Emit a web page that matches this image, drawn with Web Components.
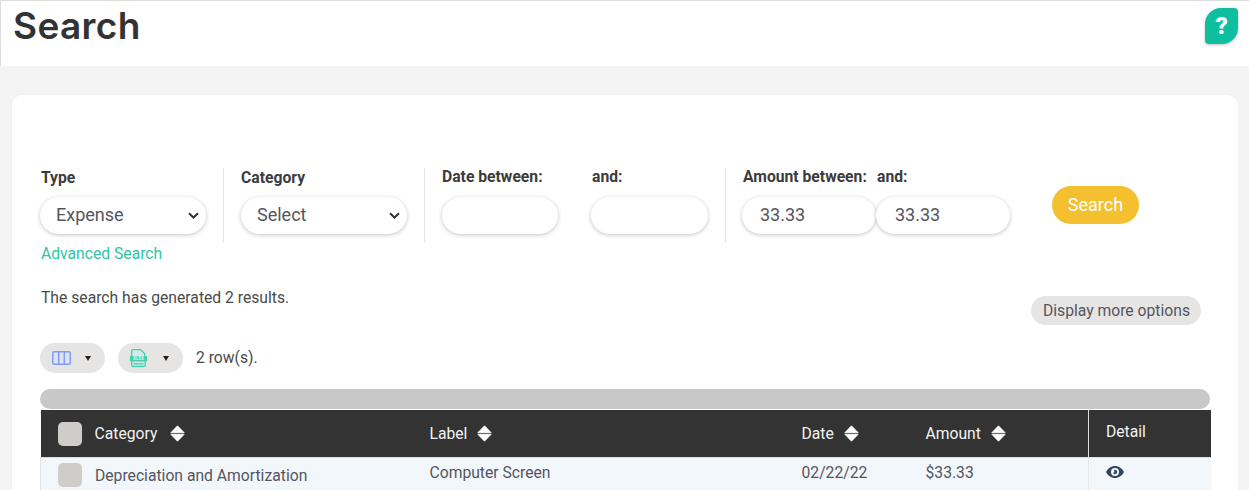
<!DOCTYPE html>
<html lang="en">
<head>
<meta charset="utf-8">
<title>Search</title>
<style>
  html, body { margin: 0; height: 490px; overflow: hidden; background: #f4f4f4; }
  body { font-family: Roboto, "Liberation Sans", sans-serif; color: #4a4a4a; }
</style>
</head>
<body>
<search-page></search-page>

<script>
const define = (name, markup) => {
  customElements.define(name, class extends HTMLElement {
    constructor() {
      super();
      this.attachShadow({ mode: 'open' });
      this.shadowRoot.innerHTML = typeof markup === 'function' ? markup(this) : markup;
    }
  });
};

const CHEVRON = `<svg width="11" height="7" viewBox="0 0 11 7"><path d="M1 1.200l4.500 4.300 4.500-4.300" fill="none" stroke="#333" stroke-width="2"/></svg>`;
const CARET = `<svg width="6" height="5" viewBox="0 0 6 5"><path d="M0 0h6L3 5z" fill="#222"/></svg>`;

define('page-header', `
  <style>
    :host { display: flex; justify-content: space-between; height: 65px; background: #fff; border-top: 1px solid #ddd; border-left: 1px solid #ddd; padding: 0 11px 0 12px; }
    h1 { margin: 2px 0 0; font: 600 37px/46px Inter, "Open Sans", sans-serif; letter-spacing: .35px; color: #333; }
    .help { width: 33px; height: 36px; margin: 7px 0 0; background: #0dbf9f; border-radius: 16px 4px 16px 4px; box-shadow: 0 1px 3px rgba(0,0,0,.25); color: #fff; font: 900 24px/36px Roboto, sans-serif; text-align: center; }
  </style>
  <h1><slot></slot></h1>
  <div class="help">?</div>
`);

define('filter-group', `
  <style>
    :host { display: flex; gap: var(--gap, 0); height: 75px; padding: 0 var(--pad-right, 17px) 0 var(--pad-left, 17px); border-left: 1px solid #e4e4e4; }
    :host(.first) { border-left: 0; padding-left: 0; }
  </style>
  <slot></slot>
`);

define('filter-field', el => `
  <style>
    :host { display: block; }
    label { display: block; height: 18px; margin: ${el.hasAttribute('low') ? '1px 0 10px' : '0 0 11px'}; padding-left: ${el.getAttribute('indent') || 0}px; font: 700 15.7px/18px Roboto, sans-serif; color: #3c3c3c; white-space: nowrap; }
  </style>
  <label>${el.getAttribute('label')}</label>
  <slot></slot>
`);

define('pill-field', el => `
  <style>
    :host { display: flex; box-sizing: border-box; align-items: center; justify-content: space-between; height: 37px; width: ${el.getAttribute('width')}px; padding: 0 7px 1px ${el.getAttribute('pad') || 16}px; background: #fff; border-radius: 19px; box-shadow: 0 1px 4px rgba(0,0,0,.24); font-size: 18px; color: #55555f; }
    span { position: relative; top: -1px; }
  </style>
  <span><slot></slot></span>
  ${el.hasAttribute('select') ? CHEVRON : ''}
`);

define('tool-pill', `
  <style>
    :host { display: flex; box-sizing: border-box; width: 65px; height: 30px; align-items: center; padding-left: 12px; gap: 14px; background: #e6e5e4; border-radius: 15px; }
    ::slotted(svg) { flex: none; }
    .caret { display: flex; margin-left: var(--caret-left, 0); }
  </style>
  <slot></slot>
  <span class="caret">${CARET}</span>
`);

define('sort-icon', `
  <style>:host { display: inline-flex; margin-left: 10px; }</style>
  <svg width="15" height="17" viewBox="0 0 15 17"><path d="M7.500 .8L14.200 7.700H.8z M.8 9.300h13.400L7.500 16.200z" fill="#fff" stroke="#fff" stroke-width=".8" stroke-linejoin="round"/></svg>
`);

define('check-box', `
  <style>:host { display: block; width: 24px; height: 24px; background: #cfcdc9; border-radius: 5px; flex: none; }</style>
`);

define('results-table', `
  <style>
    :host { display: block; }
    .bar { height: 20px; margin-bottom: 1px; background: #c8c8c8; border-radius: 10px; }
    table { width: 1170px; border-collapse: collapse; table-layout: fixed; font-size: 15.7px; }
    th { height: 47px; padding: 0 0 0 17px; background: #333; color: #f2f2f2; font-weight: 400; text-align: left; }
    th > div, td > div { display: flex; align-items: center; }
    th.detail { border-left: 1px solid #ddd; vertical-align: top; padding-top: 12px; height: 35px; }
    td { height: 32px; padding: 0 0 0 17px; background: #f2f7fc; color: #55555f; border-top: 1px solid #ddd; }
    td.first { border-left: 1px solid #e4e4e4; }
    td.first div { gap: 13px; padding-top: 2px; }
    th .gap { gap: 13px; }
    td.detail { border-left: 1px solid #e8e8e8; }
    td.detail svg { display: block; margin-top: -4px; }
    td span { position: relative; top: -2px; }
  </style>
  <div class="bar"></div>
  <table>
    <colgroup><col style="width:372px"><col style="width:372px"><col style="width:124px"><col style="width:180px"><col style="width:122px"></colgroup>
    <thead>
      <tr>
        <th><div class="gap"><check-box></check-box>Category<sort-icon style="margin-left:0"></sort-icon></div></th>
        <th><div>Label<sort-icon></sort-icon></div></th>
        <th><div>Date<sort-icon></sort-icon></div></th>
        <th><div>Amount<sort-icon></sort-icon></div></th>
        <th class="detail">Detail</th>
      </tr>
    </thead>
    <tbody>
      <tr>
        <td class="first"><div><check-box></check-box>Depreciation and Amortization</div></td>
        <td><span>Computer Screen</span></td>
        <td><span>02/22/22</span></td>
        <td><span>$33.33</span></td>
        <td class="detail"><svg width="18" height="12" viewBox="0 0 18 12"><path fill-rule="evenodd" fill="#35465c" d="M9 0c3.900 0 7.200 2.400 9 6-1.800 3.600-5.100 6-9 6S1.800 9.600 0 6c1.800-3.600 5.100-6 9-6zm0 2a4 4 0 1 0 0 8 4 4 0 0 0 0-8zm0 1.800a2.200 2.200 0 1 1-2.100 2.800c.8.300 1.700-.4 1.500-1.200-.1-.4-.3-.8-.4-1.300.3-.2.6-.3 1-.3z"/></svg></td>
      </tr>
    </tbody>
  </table>
`);

define('search-card', `
  <style>
    :host { display: block; height: 500px; margin: 29px 11px 0 12px; padding: 73px 28px 0; background: #fff; border-radius: 10px; box-sizing: border-box; box-shadow: 0 0 2px rgba(0,0,0,.05); }
    .filters { display: flex; }
    .search { align-self: center; margin: 0 0 1px 25px; width: 87px; height: 38px; background: #f5c02f; color: #fff; border-radius: 19px; font-size: 18px; line-height: 38px; text-align: center; }
    .advanced { margin-top: 1px; padding-left: 1px; font-size: 15.7px; line-height: 19px; color: #2fc4a4; }
    .summary { display: flex; justify-content: space-between; margin-top: 25px; padding: 0 9px 0 1px; font-size: 15.7px; color: #4a4a4a; }
    .summary span { line-height: 19px; }
    .more { margin-top: 8px; height: 29px; padding: 0 11px 0 12px; background: #e6e5e4; border-radius: 15px; line-height: 29px; color: #55555f; }
    .tools { display: flex; align-items: center; gap: 13px; margin-top: 18px; font-size: 15.7px; }
    .tools span { padding-bottom: 2px; }
    results-table { margin-top: 16px; }
  </style>
  <div class="filters">
    <filter-group class="first">
      <filter-field low indent="1" label="Type"><pill-field select width="166">Expense</pill-field></filter-field>
    </filter-group>
    <filter-group>
      <filter-field low label="Category"><pill-field select width="166">Select</pill-field></filter-field>
    </filter-group>
    <filter-group style="--gap:33px">
      <filter-field label="Date between:"><pill-field width="116"></pill-field></filter-field>
      <filter-field indent="1" label="and:"><pill-field width="117"></pill-field></filter-field>
    </filter-group>
    <filter-group style="--pad-left:16px">
      <filter-field indent="1" label="Amount between:"><pill-field width="134" pad="18">33.33</pill-field></filter-field>
      <filter-field indent="1" label="and:"><pill-field width="134" pad="19">33.33</pill-field></filter-field>
    </filter-group>
    <div class="search">Search</div>
  </div>
  <div class="advanced">Advanced Search</div>
  <div class="summary">
    <span>The search has generated 2 results.</span>
    <div class="more">Display more options</div>
  </div>
  <div class="tools">
    <tool-pill>
      <svg width="19" height="14" viewBox="0 0 19 14"><rect x=".75" y=".75" width="17.500" height="12.500" rx="1.500" fill="#dfe4f3" stroke="#7f9df1" stroke-width="1.500"/><path d="M6.700 1v12M12.300 1v12" stroke="#7f9df1" stroke-width="1.500"/></svg>
    </tool-pill>
    <tool-pill style="--caret-left:2px">
      <svg width="17" height="18" viewBox="0 0 17 18"><path d="M1.700 7V1.700a1 1 0 0 1 1-1h8l4 4V7M1.700 12.500v3.800a1 1 0 0 0 1 1h11.600a1 1 0 0 0 1-1v-3.800" fill="#d3ece6" stroke="#3fd0ae" stroke-width="1.300"/><rect x="0" y="7" width="17" height="5.500" fill="#3fd0ae"/><path d="M3.500 14.800h10" stroke="#3fd0ae" stroke-width="1.300"/><text x="8.500" y="11.300" text-anchor="middle" font-family="Roboto, sans-serif" font-size="4.500" font-weight="700" fill="#e6f7f2">XLSX</text></svg>
    </tool-pill>
    <span>2 row(s).</span>
  </div>
  <results-table></results-table>
`);

define('search-page', `
  <style>:host { display: block; }</style>
  <page-header>Search</page-header>
  <search-card></search-card>
`);
</script>
</body>
</html>
